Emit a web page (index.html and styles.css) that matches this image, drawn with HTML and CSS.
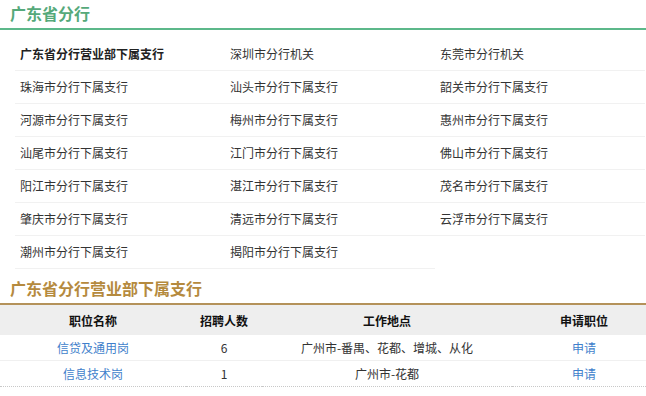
FILE: index.html
```html
<!DOCTYPE html>
<html lang="zh-CN">
<head>
<meta charset="utf-8">
<link rel="stylesheet" href="styles.css">
</head>
<body>
<div class="page">
  <h2 class="title title-green">广东省分行</h2>
  <ul class="branch-grid">
    <li class="cell cell-active">广东省分行营业部下属支行</li>
    <li class="cell">深圳市分行机关</li>
    <li class="cell">东莞市分行机关</li>
    <li class="cell">珠海市分行下属支行</li>
    <li class="cell">汕头市分行下属支行</li>
    <li class="cell">韶关市分行下属支行</li>
    <li class="cell">河源市分行下属支行</li>
    <li class="cell">梅州市分行下属支行</li>
    <li class="cell">惠州市分行下属支行</li>
    <li class="cell">汕尾市分行下属支行</li>
    <li class="cell">江门市分行下属支行</li>
    <li class="cell">佛山市分行下属支行</li>
    <li class="cell">阳江市分行下属支行</li>
    <li class="cell">湛江市分行下属支行</li>
    <li class="cell">茂名市分行下属支行</li>
    <li class="cell">肇庆市分行下属支行</li>
    <li class="cell">清远市分行下属支行</li>
    <li class="cell">云浮市分行下属支行</li>
    <li class="cell">潮州市分行下属支行</li>
    <li class="cell">揭阳市分行下属支行</li>
  </ul>
  <h2 class="title title-gold">广东省分行营业部下属支行</h2>
  <table class="jobs">
    <colgroup>
      <col class="c1"><col class="c2"><col class="c3"><col class="c4">
    </colgroup>
    <thead>
      <tr><th>职位名称</th><th>招聘人数</th><th>工作地点</th><th class="last">申请职位</th></tr>
    </thead>
    <tbody>
      <tr><td><a class="link">信贷及通用岗</a></td><td>6</td><td>广州市-番禺、花都、增城、从化</td><td class="last"><a class="link">申请</a></td></tr>
      <tr class="end"><td><a class="link">信息技术岗</a></td><td>1</td><td>广州市-花都</td><td class="last"><a class="link">申请</a></td></tr>
    </tbody>
  </table>
</div>
</body>
</html>
```
FILE: styles.css
```css
html, body {
  margin: 0;
  padding: 0;
  background: #fff;
}
body {
  font-family: "Noto Sans CJK SC", "Microsoft YaHei", sans-serif;
  font-size: 12px;
  color: #333;
  overflow: hidden;
}
.page {
  width: 646px;
}
.title {
  margin: 0;
  padding-left: 10px;
  font-size: 16px;
  font-weight: bold;
}
.title-green {
  height: 28px;
  line-height: 26px;
  color: #55a97a;
  border-bottom: 2px solid #5cb88a;
}
.title-gold {
  height: 30px;
  padding-top: 4px;
  line-height: 30px;
  color: #b58a3e;
  border-bottom: 2px solid #b4925a;
}
.branch-grid {
  list-style: none;
  margin: 8px 0 0 15px;
  padding: 0;
  display: grid;
  grid-template-columns: repeat(3, 210px);
}
.cell {
  height: 32px;
  line-height: 32px;
  padding-left: 5px;
  border-bottom: 1px solid #f1f1f1;
  color: #333;
}
.cell-active {
  font-weight: bold;
  color: #222;
}
.jobs {
  width: 646px;
  table-layout: fixed;
  border-collapse: collapse;
}
.c1 { width: 186px; }
.c2 { width: 76px; }
.c3 { width: 250px; }
.c4 { width: 134px; }
.jobs th {
  background: #eeeeee;
  height: 29px;
  padding: 1px 0 0;
  font-weight: bold;
  color: #111;
  text-align: center;
}
.jobs td {
  height: 25px;
  padding: 0;
  text-align: center;
  color: #333;
  border-bottom: 1px solid #f0f0f0;
}
.jobs .last {
  padding-left: 10px;
}
.jobs tr.end td {
  border-bottom: 1px dotted #c8c8c8;
}
.link {
  color: #3f7fcb;
  text-decoration: none;
}
```
